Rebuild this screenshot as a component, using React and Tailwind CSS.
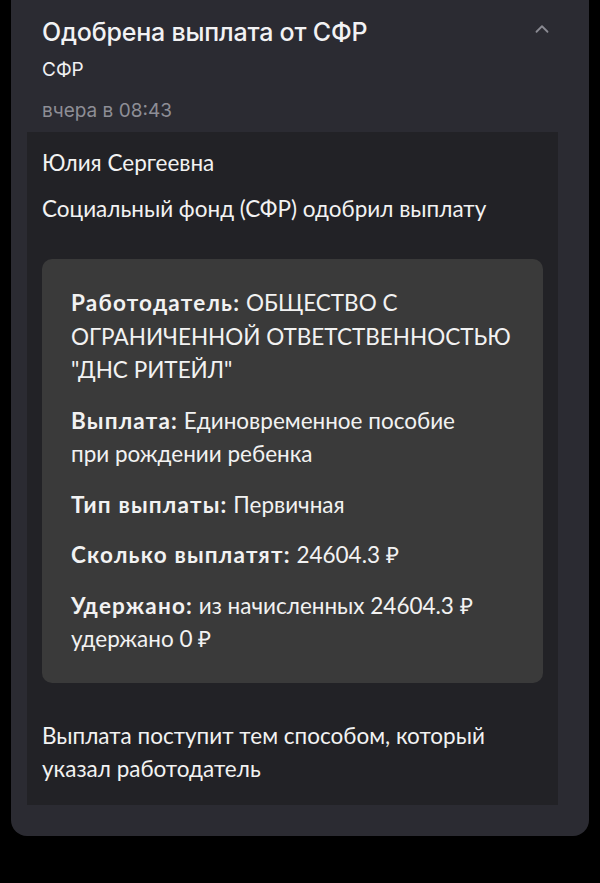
import { ChevronUp } from "lucide-react";

const rows = [
    {
        label: "Работодатель:",
        lines: ["ОБЩЕСТВО С", "ОГРАНИЧЕННОЙ ОТВЕТСТВЕННОСТЬЮ", '"ДНС РИТЕЙЛ"'],
    },
    { label: "Выплата:", lines: ["Единовременное пособие", "при рождении ребенка"] },
    { label: "Тип выплаты:", lines: ["Первичная"] },
    { label: "Сколько выплатят:", lines: ["24604.3 ₽"] },
    { label: "Удержано:", lines: ["из начисленных 24604.3 ₽", "удержано 0 ₽"] },
];

export default function App() {
    return (
        <div className="min-h-[883px] w-[600px] bg-black">
            <div className="ml-[11px] w-[578px] rounded-b-[16px] bg-[#2b2b32] pb-[31px]">
                <div className="flex items-start justify-between pl-[31px] pr-[36px] pt-[16px] font-['Inter',sans-serif]">
                    <div>
                        <div className="text-[25px] leading-[32px] font-medium tracking-[-0.2px] text-[#f2f2f4]">
                            Одобрена выплата от СФР
                        </div>
                        <div className="mt-[10px] text-[19px] leading-[24px] text-[#f0f0f2]">
                            СФР
                        </div>
                        <div className="mt-[17px] text-[19px] leading-[24px] text-[#8e8e96]">
                            вчера в 08:43
                        </div>
                    </div>
                    <ChevronUp className="mt-[2px] text-[#8a8a92]" size={22} strokeWidth={2} />
                </div>
                <div className="ml-[16px] mr-[31px] mt-[9px] bg-[#222226] px-[15px] pt-[18px] pb-[19px] font-['Lato',sans-serif] text-[22.5px] text-[#f2f2f2]">
                    <p className="leading-[26px]">Юлия Сергеевна</p>
                    <p className="mt-[20px] leading-[26px]">
                        Социальный фонд (СФР) одобрил выплату
                    </p>
                    <div className="mt-[37px] rounded-[10px] bg-[#3a3a3a] pl-[29px] pr-[8px] pt-[27px] pb-[27px]">
                        {rows.map((r, i) => (
                            <p
                                key={i}
                                className={`whitespace-nowrap leading-[33.5px] ${i > 0 ? "mt-[17px]" : ""}`}
                            >
                                <span className="font-bold tracking-[1.2px]">{r.label}</span>{" "}
                                {r.lines.map((l, j) => (
                                    <span key={j}>
                                        {j > 0 && <br />}
                                        {l}
                                    </span>
                                ))}
                            </p>
                        ))}
                    </div>
                    <p className="mt-[36px] leading-[33.5px]">
                        Выплата поступит тем способом, который
                        <br />
                        указал работодатель
                    </p>
                </div>
            </div>
        </div>
    );
}
